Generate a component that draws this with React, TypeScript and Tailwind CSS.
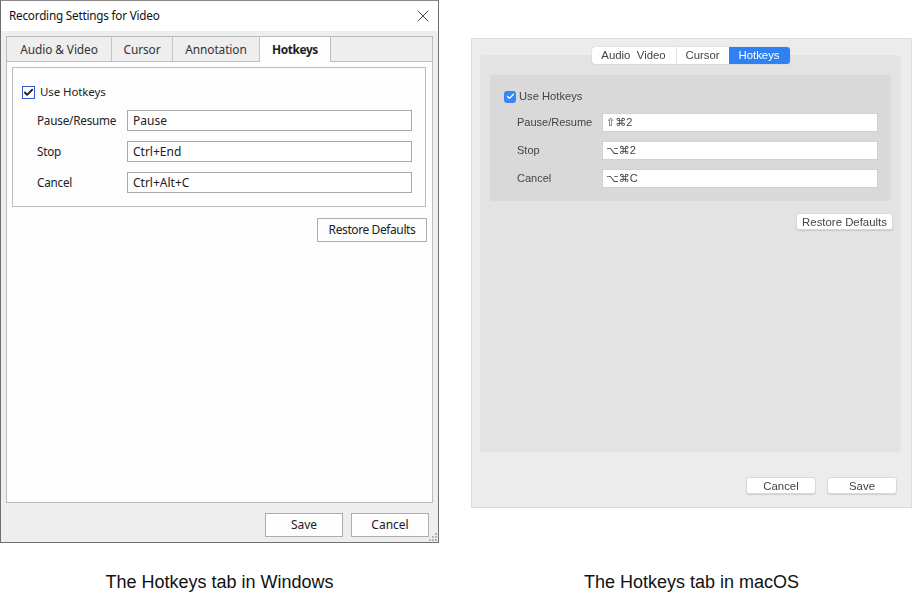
import { Check, X } from 'lucide-react';

const winFont = "[font-family:'Noto_Sans',sans-serif]";
const macFont = "[font-family:'Liberation_Sans','DejaVu_Sans',sans-serif]";

const winTabs = [
  { label: 'Audio & Video', width: 'w-[105px]' },
  { label: 'Cursor', width: 'w-[61px]' },
  { label: 'Annotation', width: 'w-[87px]' },
];

const winRows = [
  { label: 'Pause/Resume', value: 'Pause' },
  { label: 'Stop', value: 'Ctrl+End' },
  { label: 'Cancel', value: 'Ctrl+Alt+C' },
];

const macRows = [
  { label: 'Pause/Resume', value: '⇧⌘2' },
  { label: 'Stop', value: '⌥⌘2' },
  { label: 'Cancel', value: '⌥⌘C' },
];

function WinButton({ label, className }: { label: string; className: string }) {
  return (
    <button className={`h-6 bg-[#fdfdfd] border border-[#adadad] text-[12px] text-[#222] ${className}`}>
      {label}
    </button>
  );
}

function WindowsDialog() {
  return (
    <div className={`relative w-[439px] h-[543px] flex flex-col bg-[#eeeeee] border border-[#6f6f6f] border-t-[#8a8a8a] ${winFont}`}>
      <div className="h-[30px] shrink-0 bg-white flex items-center justify-between pl-2 pr-[5px] text-[11.7px] tracking-[-0.2px] text-[#111]">
        <span>Recording Settings for Video</span>
        <X size={20} strokeWidth={1} className="text-[#222]" />
      </div>
      <div className="mx-[5px] mt-[5px] h-[467px] flex flex-col border border-[#bcbcbc] bg-[#fdfdfd]">
        <div className="flex h-[25px] shrink-0 bg-[#eeeeee] text-[11.9px] tracking-[-0.1px] text-[#333]">
          {winTabs.map(tab => (
            <div key={tab.label} className={`${tab.width} flex items-center justify-center pt-[1px] border-r border-b border-r-[#c4c4c4] border-b-[#bcbcbc]`}>
              {tab.label}
            </div>
          ))}
          <div className="w-[71px] flex items-center justify-center pt-[1px] bg-[#fdfdfd] border-r border-r-[#bcbcbc] font-bold tracking-[-0.4px] text-[#222]">
            Hotkeys
          </div>
          <div className="flex-1 border-b border-b-[#bcbcbc]" />
        </div>
        <div className="flex flex-col pl-[5px] pr-[6px] pt-[5px]">
          <div className="h-[140px] border border-[#bcbcbc] pl-[9px] pr-[13px] pt-[17px]">
            <div className="flex items-center gap-[5px] h-[14px] text-[11.5px] tracking-[-0.1px] text-[#222]">
              <span className="w-[13px] h-[13px] flex items-center justify-center border border-[#3558d0] bg-white">
                <Check size={11} strokeWidth={4} className="text-[#222]" />
              </span>
              Use Hotkeys
            </div>
            <div className="flex flex-col gap-[10px] mt-[11px] pl-[15px]">
              {winRows.map(row => (
                <div key={row.label} className="flex items-center text-[12px] text-[#222]">
                  <span className="w-[90px] text-[11.7px] tracking-[-0.2px]">{row.label}</span>
                  <div className="flex-1 h-[21px] flex items-center px-[5px] bg-white border border-[#a9a9a9]">{row.value}</div>
                </div>
              ))}
            </div>
          </div>
          <div className="flex justify-end mt-[11px]">
            <WinButton label="Restore Defaults" className="w-[110px] mr-[-1px] tracking-[-0.4px]" />
          </div>
        </div>
      </div>
      <div className="flex justify-end gap-2 mt-[10px] pr-[9px]">
        <WinButton label="Save" className="w-[78px]" />
        <WinButton label="Cancel" className="w-[78px]" />
      </div>
      <svg className="absolute right-0 bottom-0" width="10" height="10" viewBox="0 0 10 10" fill="#b5b5b5">
        <rect x="7" y="1" width="2" height="2" />
        <rect x="4" y="4" width="2" height="2" />
        <rect x="7" y="4" width="2" height="2" />
        <rect x="1" y="7" width="2" height="2" />
        <rect x="4" y="7" width="2" height="2" />
        <rect x="7" y="7" width="2" height="2" />
      </svg>
    </div>
  );
}

function MacButton({ label, className }: { label: string; className: string }) {
  return (
    <button className={`bg-white rounded-[3px] border border-[#d8d8d8] shadow-[0_1px_1px_rgba(0,0,0,0.12)] text-[11.4px] text-[#444] ${className}`}>
      {label}
    </button>
  );
}

function MacDialog() {
  return (
    <div className={`w-[441px] h-[470px] flex flex-col bg-[#ececec] border border-[#dcdcdc] pl-[8px] pr-[10px] pt-[8px] blur-[0.35px] ${macFont}`}>
      <div className="flex justify-center h-[18px] relative z-10">
        <div className="flex w-[198px] h-[17px] bg-white rounded-[3px] shadow-[0_0_1px_rgba(0,0,0,0.35)] text-[11.4px] text-[#444]">
          <div className="w-[85px] flex items-center justify-center border-r border-[#e4e4e4] whitespace-pre">Audio  Video</div>
          <div className="w-[52px] flex items-center justify-center">Cursor</div>
          <div className="flex-1 flex items-center justify-center rounded-r-[3px] bg-[#2f80f2] text-white">Hotkeys</div>
        </div>
      </div>
      <div className="mt-[-10px] h-[397px] flex flex-col bg-[#e3e3e3] rounded-[4px] px-[10px] pt-[20px]">
        <div className="h-[126px] bg-[#d9d9d9] rounded-[3px] pl-[14px] pr-[13px] pt-[15px]">
          <div className="flex items-center gap-[3px] h-[13px] text-[11.2px] text-[#444]">
            <span className="w-[12px] h-[12px] flex items-center justify-center rounded-[3px] bg-[#3a86f4]">
              <Check size={9} strokeWidth={3.5} className="text-white" />
            </span>
            Use Hotkeys
          </div>
          <div className="flex flex-col gap-[9px] mt-[10px] pl-[13px]">
            {macRows.map(row => (
              <div key={row.label} className="flex items-center text-[11px] text-[#444]">
                <span className="w-[85px]">{row.label}</span>
                <div className="flex-1 h-[19px] flex items-center px-[3px] bg-white border border-[#d2d2d2] text-[#444]">{row.value}</div>
              </div>
            ))}
          </div>
        </div>
        <div className="flex justify-end mt-[12px] mr-[-2px]">
          <MacButton label="Restore Defaults" className="w-[97px] h-[17px]" />
        </div>
      </div>
      <div className="flex justify-end gap-[11px] mt-[25px] pr-[4px]">
        <MacButton label="Cancel" className="w-[70px] h-[17px]" />
        <MacButton label="Save" className="w-[70px] h-[17px]" />
      </div>
    </div>
  );
}

export default function App() {
  return (
    <div className="w-[914px] h-[595px] overflow-hidden bg-white flex">
      <div className="w-[439px] flex flex-col items-center">
        <WindowsDialog />
        <p className="mt-[29px] text-[18px] leading-5 text-[#111] [font-family:'Liberation_Sans',sans-serif]">The Hotkeys tab in Windows</p>
      </div>
      <div className="w-[441px] ml-[32px] pt-[38px] flex flex-col items-center">
        <MacDialog />
        <p className="mt-[64px] text-[18px] leading-5 text-[#111] [font-family:'Liberation_Sans',sans-serif]">The Hotkeys tab in macOS</p>
      </div>
    </div>
  );
}
